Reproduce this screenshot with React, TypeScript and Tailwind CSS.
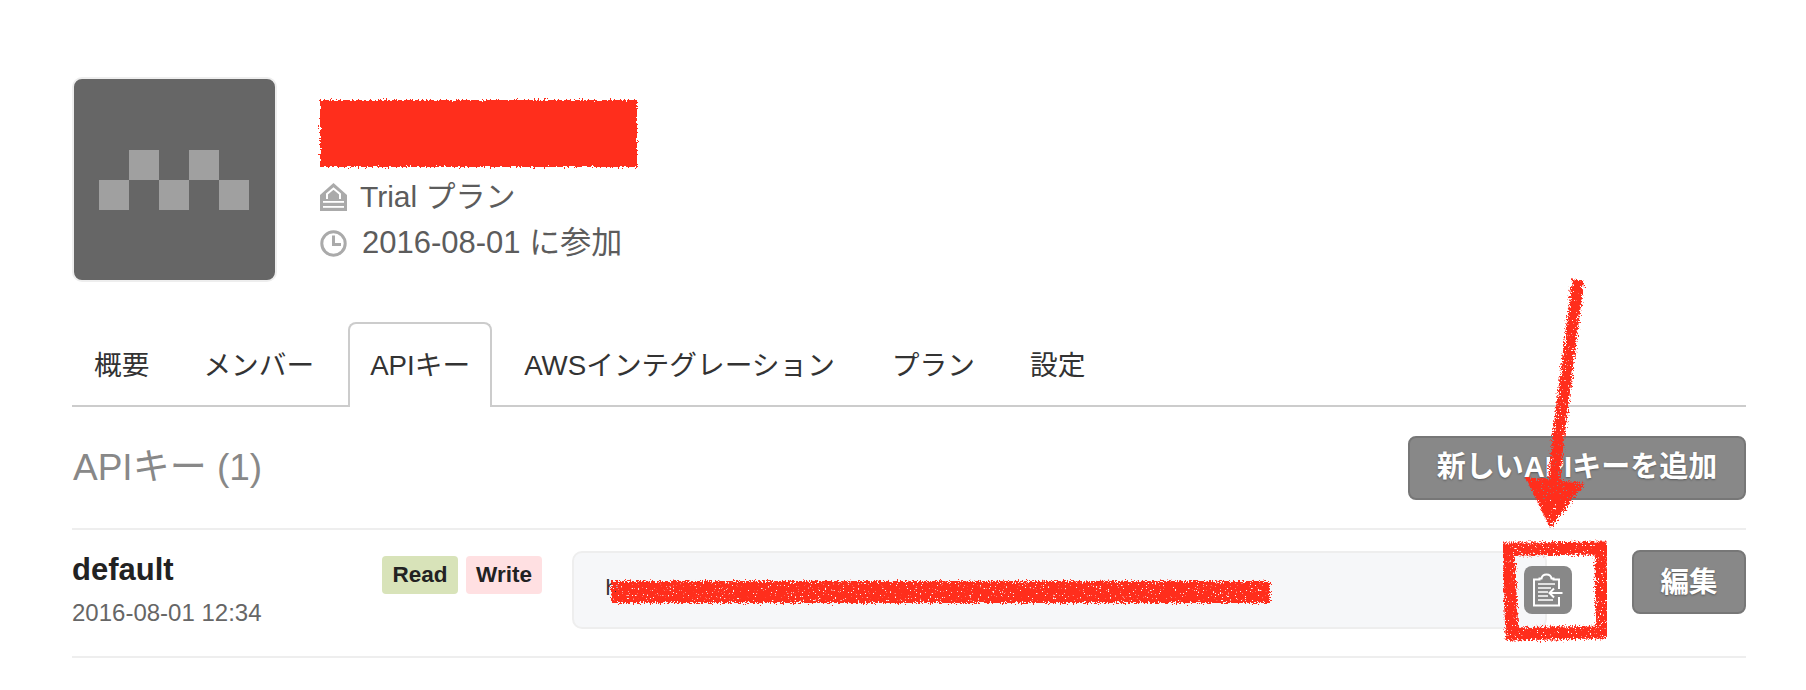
const tabs = [
  { label: '概要', className: 'pl-[22px] pr-[21px] pt-[4px]' },
  { label: 'メンバー', className: 'px-[21px] pt-[4px]' },
  {
    label: 'APIキー',
    className: 'ml-px -mr-px h-[85px] rounded-t-[8px] border-2 border-b-0 border-[#cccccc] bg-white px-[20px]',
  },
  { label: 'AWSインテグレーション', className: 'px-[21px] pt-[4px]' },
  { label: 'プラン', className: 'ml-[3px] px-[21px] pt-[4px]' },
  { label: '設定', className: 'ml-px px-[21px] pt-[4px]' },
]

function PlanIcon() {
  return (
    <svg width="27" height="28" viewBox="0 0 27 28" className="shrink-0">
      <path d="M0 28V12L13.500 0L27 12V28Z" fill="#aaa" />
      <path d="M7 16V11L13.500 5.500L20 11V16" fill="none" stroke="#fff" strokeWidth="2" />
      <rect x="3" y="18" width="21" height="1.800" fill="#fff" />
      <rect x="3" y="23" width="21" height="1.800" fill="#fff" />
    </svg>
  )
}

function ClockIcon() {
  return (
    <svg width="27" height="27" viewBox="0 0 27 27" className="shrink-0">
      <circle cx="13.500" cy="13.500" r="11.700" fill="none" stroke="#aaa" strokeWidth="3" />
      <path d="M13.500 5.500V14.500H21" fill="none" stroke="#aaa" strokeWidth="3" />
    </svg>
  )
}

function Identicon() {
  return (
    <svg width="150" height="60" viewBox="0 0 150 60" fill="#a0a0a0">
      <rect x="30" y="0" width="30" height="30" />
      <rect x="90" y="0" width="30" height="30" />
      <rect x="0" y="30" width="30" height="30" />
      <rect x="60" y="30" width="30" height="30" />
      <rect x="120" y="30" width="30" height="30" />
    </svg>
  )
}

function ClipboardIcon() {
  return (
    <svg width="48" height="48" viewBox="0 0 48 48" fill="none" stroke="#fff" strokeWidth="2">
      <path d="M35 23V13.500H29.500V12.500H27.500C27 9.500 25 8.500 22.500 8.500C20 8.500 18 9.500 17.500 12.500H15.500V13.500H10V39.500H35V31" />
      <path d="M14 18H31M14 22H27M14 26H24M14 30H24M14 34H29" strokeWidth="1.600" />
      <path d="M38.500 27H26M30 22.500L25.500 27L30 31.500" />
    </svg>
  )
}

function Annotations() {
  return (
    <svg width="1806" height="690" viewBox="0 0 1806 690" className="pointer-events-none absolute top-0 left-0 z-10">
      <defs>
        <filter id="rough" x="-5%" y="-5%" width="110%" height="110%">
          <feTurbulence type="fractalNoise" baseFrequency="0.5" numOctaves="2" seed="4" />
          <feDisplacementMap in="SourceGraphic" scale="7" />
        </filter>
        <filter id="speckle" x="-5%" y="-20%" width="110%" height="140%">
          <feTurbulence type="fractalNoise" baseFrequency="0.6" numOctaves="2" seed="9" result="noise" />
          <feDisplacementMap in="SourceGraphic" in2="noise" scale="9" result="shape" />
          <feColorMatrix
            in="noise"
            type="matrix"
            values="0 0 0 0 0  0 0 0 0 0  0 0 0 0 0  0 0 0 -14 10.500"
            result="holes"
          />
          <feComposite in="shape" in2="holes" operator="in" />
        </filter>
      </defs>
      <rect filter="url(#rough)" x="320" y="100" width="317" height="67" fill="#ff2d1f" />
      <rect filter="url(#speckle)" x="611" y="581" width="659" height="22" fill="#ff2d1f" />
      <g filter="url(#speckle)" fill="none" stroke="#ff2d1f" strokeWidth="13">
        <path d="M1508 549L1601 548L1602 632L1512 634Z" />
        <path d="M1578 280L1558 440L1553 490" strokeWidth="12" />
      </g>
      <path filter="url(#speckle)" d="M1525 477L1585 483L1550 528Z" fill="#ff2d1f" />
    </svg>
  )
}

export default function App() {
  return (
    <div className="relative h-[690px] w-[1806px] overflow-hidden bg-white font-['Liberation_Sans','Noto_Sans_CJK_JP',sans-serif]">
      <Annotations />
      <div className="ml-[72px] w-[1674px] pt-[77px]">
        <div className="flex gap-[43px]">
          <div className="flex h-[205px] w-[205px] items-center justify-center rounded-[10px] border-2 border-[#eeeeee] bg-[#666666] pr-[2px]">
            <Identicon />
          </div>
          <div className="pt-[97px] text-[30px] leading-[46px] text-[#5c5c5c]">
            <div className="flex items-center gap-[13px]">
              <PlanIcon />
              <span>Trial プラン</span>
            </div>
            <div className="flex items-center gap-[15px] text-[31px]">
              <ClockIcon />
              <span>2016-08-01 に参加</span>
            </div>
          </div>
        </div>

        <div className="mt-[40px] flex h-[85px] gap-[12px] border-b-2 border-[#cccccc] text-[27.700px] text-[#333333]">
          {tabs.map((tab) => (
            <div key={tab.label} className={`flex items-center ${tab.className}`}>
              {tab.label}
            </div>
          ))}
        </div>

        <div className="flex items-center justify-between pt-[29px] pb-[28px]">
          <h2 className="pl-px text-[37px] font-normal text-[#888888]">APIキー (1)</h2>
          <button className="h-[64px] w-[338px] rounded-[8px] border-2 border-[#777777] bg-[#888888] text-[29px] font-bold text-white [text-shadow:0_1px_2px_rgba(0,0,0,0.35)]">
            新しいAPIキーを追加
          </button>
        </div>

        <div className="flex h-[130px] border-y-2 border-[#eeeeee] pt-[21px]">
          <div className="w-[310px]">
            <div className="mt-px text-[31px] leading-[36px] font-bold text-[#222222]">default</div>
            <div className="mt-[10px] text-[24px] leading-[30px] text-[#666666]">2016-08-01 12:34</div>
          </div>
          <div className="flex h-[38px] w-[190px] gap-[8px] pt-[5px] text-[22.500px] font-bold text-[#222222]">
            <span className="flex h-[38px] w-[76px] items-center justify-center rounded-[4px] bg-[#d8e3b9]">Read</span>
            <span className="flex h-[38px] w-[76px] items-center justify-center rounded-[4px] bg-[#ffe0e2]">Write</span>
          </div>
          <div className="relative h-[78px] w-[975px] rounded-[10px] border-2 border-[#eeeeee] bg-[#f6f7f9] pl-[31px] font-['Liberation_Mono',monospace] text-[22px] leading-[74px] text-[#333333]">
            h
            <button className="absolute top-[13px] left-[950px] flex h-[48px] w-[48px] items-center justify-center rounded-[8px] bg-[#888888]">
              <ClipboardIcon />
            </button>
          </div>
          <button className="ml-[85px] -mt-px h-[64px] w-[114px] rounded-[8px] border-2 border-[#777777] bg-[#888888] text-[28.500px] font-bold text-white [text-shadow:0_1px_2px_rgba(0,0,0,0.35)]">
            編集
          </button>
        </div>
      </div>
    </div>
  )
}
